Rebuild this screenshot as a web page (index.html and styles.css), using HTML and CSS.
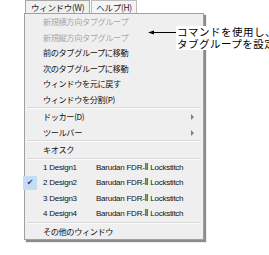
FILE: index.html
```html
<!DOCTYPE html>
<html lang="ja">
<head>
<meta charset="utf-8">
<link rel="stylesheet" href="styles.css">
</head>
<body>
<div class="menubar">
  <div class="tab active">ウィンドウ(W)</div>
  <div class="tab">ヘルプ(H)</div>
</div>
<div class="menu">
  <div class="item disabled">新規横方向タブグループ</div>
  <div class="item disabled">新規縦方向タブグループ</div>
  <div class="item">前のタブグループに移動</div>
  <div class="item">次のタブグループに移動</div>
  <div class="item">ウィンドウを元に戻す</div>
  <div class="item">ウィンドウを分割(P)</div>
  <div class="sep"></div>
  <div class="item sub">ドッカー(D)<span class="arrow"></span></div>
  <div class="item sub">ツールバー<span class="arrow"></span></div>
  <div class="sep"></div>
  <div class="item">キオスク</div>
  <div class="sep"></div>
  <div class="item design"><span class="name">1 Design1</span><span class="mach">Barudan FDR-Ⅱ Lockstitch</span></div>
  <div class="item design checked"><span class="check">✔</span><span class="name">2 Design2</span><span class="mach">Barudan FDR-Ⅱ Lockstitch</span></div>
  <div class="item design"><span class="name">3 Design3</span><span class="mach">Barudan FDR-Ⅱ Lockstitch</span></div>
  <div class="item design"><span class="name">4 Design4</span><span class="mach">Barudan FDR-Ⅱ Lockstitch</span></div>
  <div class="sep"></div>
  <div class="item">その他のウィンドウ</div>
</div>
<div class="callout">
  <svg class="pointer" width="28" height="5" viewBox="0 0 28 5"><line x1="3" y1="2.5" x2="28" y2="2.5" stroke="#000" stroke-width="1"/><polygon points="0,2.5 6,0.5 6,4.5" fill="#000"/></svg>
  <div class="note">コマンドを使用し、<br>タブグループを設定</div>
</div>
</body>
</html>
```
FILE: styles.css
```css
html, body {
  margin: 0;
  padding: 0;
  background: #fff;
}
body {
  position: relative;
  width: 269px;
  height: 255px;
  overflow: hidden;
  font-family: "Noto Sans CJK JP", "Noto Sans", sans-serif;
  font-size: 8.2px;
  letter-spacing: -0.4px;
  color: #111;
}
.menubar {
  display: flex;
  margin-left: 25px;
  height: 13px;
}
.tab {
  height: 13px;
  line-height: 12px;
  padding: 0 4px;
  font-size: 8.5px;
  letter-spacing: -0.3px;
  color: #222;
  box-sizing: border-box;
  border: 1px solid #bdbdbd;
  border-bottom: none;
  background: #f5f5f5;
}
.tab.active {
  padding: 0 5px;
  background: #f0f0f0;
  border-color: #a8a8a8;
}
.tab + .tab {
  margin-left: 1px;
}
.menu {
  margin-left: 24px;
  width: 180px;
  background: #efefef;
  border: 1px solid #a0a0a0;
  box-shadow: 2px 2px 1px rgba(0,0,0,0.45);
  box-sizing: border-box;
}
.item {
  position: relative;
  height: 15.5px;
  line-height: 15.5px;
  padding-left: 18px;
  white-space: nowrap;
}
.item.disabled {
  color: #a8a8a8;
}
.sep {
  height: 1px;
  background: #d9d9d9;
  border-bottom: 1px solid #fafafa;
  margin: 0 2px;
}
.arrow {
  position: absolute;
  right: 9px;
  top: 5px;
  width: 0;
  height: 0;
  border-top: 3px solid transparent;
  border-bottom: 3px solid transparent;
  border-left: 3px solid #808080;
}
.design {
  display: flex;
  font-family: "Liberation Sans", "DejaVu Sans", sans-serif;
  font-size: 8px;
  letter-spacing: -0.25px;
}
.design .name {
  width: 53px;
}
.check {
  position: absolute;
  left: -2px;
  top: 1px;
  width: 14px;
  height: 14px;
  line-height: 14px;
  text-align: center;
  background: #c5dcf5;
  color: #3a3a6a;
  font-family: "DejaVu Sans", sans-serif;
  font-size: 8px;
  letter-spacing: 0;
}
.callout {
  position: absolute;
  left: 148px;
  top: 26px;
  display: flex;
  align-items: flex-start;
}
.pointer {
  margin-top: 4px;
}
.note {
  background: #fff;
  font-size: 10.5px;
  line-height: 12px;
  letter-spacing: 0.5px;
  color: #000;
  padding: 0 0 0 1px;
  white-space: nowrap;
}
```
